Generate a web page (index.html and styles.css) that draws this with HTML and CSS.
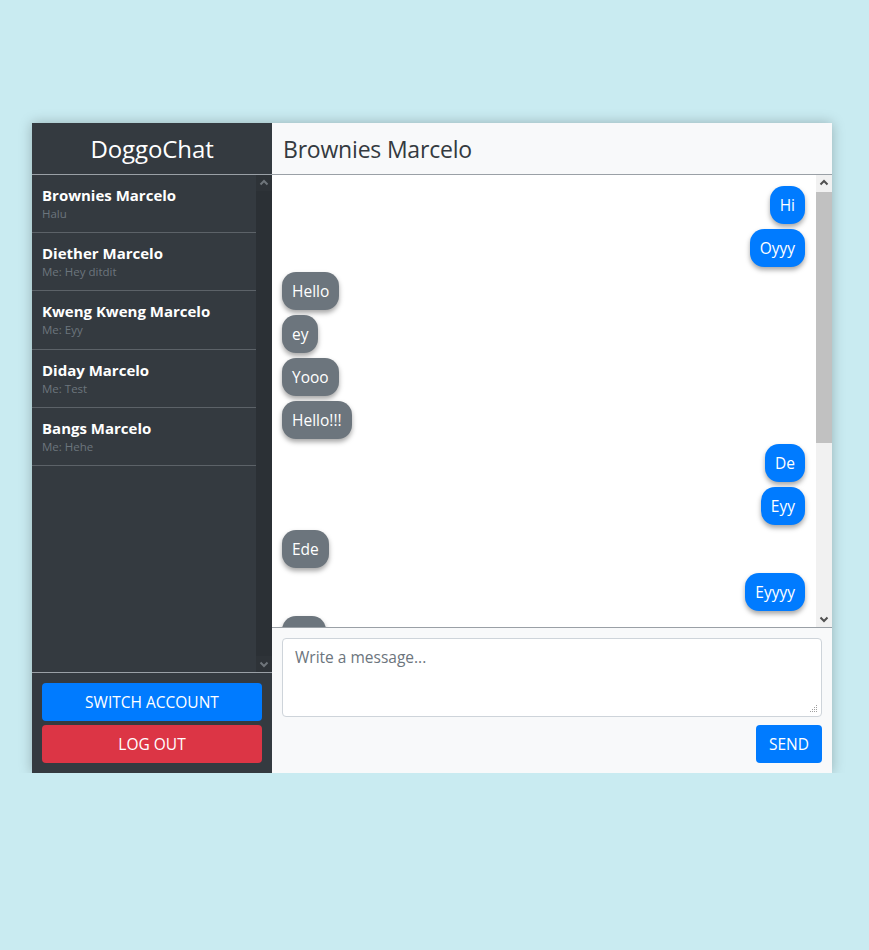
FILE: index.html
```html
<!DOCTYPE html>
<html lang="en">
<head>
<meta charset="utf-8">
<title>DoggoChat</title>
<link rel="stylesheet" href="styles.css">
</head>
<body>
<div class="app">
  <aside class="sidebar">
    <div class="brand">DoggoChat</div>
    <div class="contacts-wrap">
      <ul class="contacts">
        <li class="contact"><div class="c-name">Brownies Marcelo</div><div class="c-last">Halu</div></li>
        <li class="contact"><div class="c-name">Diether Marcelo</div><div class="c-last">Me: Hey ditdit</div></li>
        <li class="contact"><div class="c-name">Kweng Kweng Marcelo</div><div class="c-last">Me: Eyy</div></li>
        <li class="contact"><div class="c-name">Diday Marcelo</div><div class="c-last">Me: Test</div></li>
        <li class="contact"><div class="c-name">Bangs Marcelo</div><div class="c-last">Me: Hehe</div></li>
      </ul>
      <div class="sbar sbar-dark">
        <div class="sbtn"><svg width="16" height="16" viewBox="0 0 16 16"><path d="M4.5 9.5 L8 6 L11.5 9.5" fill="none" stroke="#6f757b" stroke-width="2"/></svg></div>
        <div class="strack"></div>
        <div class="sbtn"><svg width="16" height="16" viewBox="0 0 16 16"><path d="M4.5 6.5 L8 10 L11.5 6.5" fill="none" stroke="#6f757b" stroke-width="2"/></svg></div>
      </div>
    </div>
    <div class="account">
      <button class="btn btn-primary">SWITCH ACCOUNT</button>
      <button class="btn btn-danger">LOG OUT</button>
    </div>
  </aside>
  <main class="chat">
    <div class="chat-title">Brownies Marcelo</div>
    <div class="messages-wrap">
      <div class="messages">
        <div class="msg me"><span>Hi</span></div>
        <div class="msg me"><span>Oyyy</span></div>
        <div class="msg them"><span>Hello</span></div>
        <div class="msg them"><span>ey</span></div>
        <div class="msg them"><span>Yooo</span></div>
        <div class="msg them"><span>Hello!!!</span></div>
        <div class="msg me"><span>De</span></div>
        <div class="msg me"><span>Eyy</span></div>
        <div class="msg them"><span>Ede</span></div>
        <div class="msg me"><span>Eyyyy</span></div>
        <div class="msg them"><span>Eyy</span></div>
      </div>
      <div class="sbar sbar-light">
        <div class="sbtn"><svg width="16" height="16" viewBox="0 0 16 16"><path d="M4.5 9.5 L8 6 L11.5 9.5" fill="none" stroke="#505050" stroke-width="2"/></svg></div>
        <div class="strack"><div class="sthumb"></div></div>
        <div class="sbtn"><svg width="16" height="16" viewBox="0 0 16 16"><path d="M4.5 6.5 L8 10 L11.5 6.5" fill="none" stroke="#505050" stroke-width="2"/></svg></div>
      </div>
    </div>
    <div class="composer">
      <textarea class="input" placeholder="Write a message..."></textarea>
      <div class="actions"><button class="btn btn-primary btn-send">SEND</button></div>
    </div>
  </main>
</div>
</body>
</html>
```
FILE: styles.css
```css
html, body {
  margin: 0;
  padding: 0;
}
body {
  background: #c9ebf1;
  font-family: "Open Sans", "Noto Sans", sans-serif;
  color: #212529;
  padding: 123px 37px 0 32px;
}
.app {
  width: 800px;
  height: 650px;
  display: grid;
  grid-template-columns: 240px 1fr;
  box-shadow: 0 0 12px rgba(0, 0, 0, 0.25);
}
.sidebar {
  background: #343a40;
  display: flex;
  flex-direction: column;
  min-height: 0;
}
.brand {
  height: 51px;
  border-bottom: 1px solid #9aa0a6;
  color: #fff;
  font-size: 24px;
  display: flex;
  align-items: center;
  justify-content: center;
  letter-spacing: -0.1px;
}
.contacts-wrap {
  flex: 1;
  min-height: 0;
  display: flex;
}
.contacts {
  list-style: none;
  margin: 0;
  padding: 0;
  flex: 1;
  overflow: hidden;
}
.sbar {
  width: 16px;
  flex-shrink: 0;
  display: flex;
  flex-direction: column;
}
.sbtn {
  height: 16px;
  flex-shrink: 0;
}
.sbtn svg { display: block; }
.strack {
  flex: 1;
  display: flex;
  flex-direction: column;
}
.sbar-dark { background: #2b3035; }
.sbar-dark .sbtn { background: #2e3338; }
.sbar-light { background: #f1f1f1; }
.sthumb {
  margin-top: 1px;
  height: 251px;
  background: #c1c1c1;
}
.contact {
  padding: 10px 10px;
  border-bottom: 1px solid #5c6268;
}
.c-name {
  color: #fff;
  font-weight: 700;
  font-size: 15px;
  line-height: 21px;
  letter-spacing: 0;
}
.c-last {
  color: #6c757d;
  font-size: 11.5px;
  line-height: 16.2px;
}
.account {
  border-top: 1px solid #9aa0a6;
  padding: 10px;
  display: flex;
  flex-direction: column;
  gap: 4px;
}
.btn {
  font-family: inherit;
  font-size: 15.5px;
  color: #fff;
  border: none;
  border-radius: 4px;
  height: 38px;
  padding: 0 12px;
  cursor: pointer;
}
.btn-primary { background: #007bff; }
.btn-danger { background: #dc3545; }
.chat {
  background: #f8f9fa;
  display: flex;
  flex-direction: column;
  min-height: 0;
  min-width: 0;
}
.chat-title {
  height: 51px;
  border-bottom: 1px solid #9aa0a6;
  font-size: 23px;
  color: #343a40;
  display: flex;
  align-items: center;
  padding-left: 11px;
  letter-spacing: -0.2px;
}
.messages-wrap {
  height: 452px;
  flex-shrink: 0;
  display: flex;
  background: #fff;
  border-bottom: 1px solid #9aa0a6;
}
.messages {
  flex: 1;
  overflow: hidden;
  padding: 11px 11px 0 10px;
  display: flex;
  flex-direction: column;
  gap: 5px;
}
.msg {
  display: flex;
  flex-shrink: 0;
}
.msg.me { justify-content: flex-end; }
.msg span {
  display: inline-block;
  color: #fff;
  font-size: 15.5px;
  line-height: 24px;
  padding: 7px 10px;
  border-radius: 14px;
  box-shadow: 0 3px 5px rgba(0, 0, 0, 0.35);
}
.msg.me span { background: #007bff; }
.msg.them span { background: #6c757d; }
.composer {
  flex: 1;
  padding: 10px;
  display: flex;
  flex-direction: column;
}
.input {
  font-family: inherit;
  font-size: 15.5px;
  line-height: 24px;
  height: 79px;
  box-sizing: border-box;
  border: 1px solid #ced4da;
  border-radius: 4px;
  padding: 6px 12px;
  color: #495057;
  background-color: #fff;
  background-image: url("data:image/svg+xml;utf8,<svg xmlns='http://www.w3.org/2000/svg' width='8' height='8'><g fill='%23a0a0a0'><rect x='6' y='0' width='1' height='1'/><rect x='4' y='2' width='1' height='1'/><rect x='6' y='2' width='1' height='1'/><rect x='2' y='4' width='1' height='1'/><rect x='4' y='4' width='1' height='1'/><rect x='6' y='4' width='1' height='1'/><rect x='0' y='6' width='1' height='1'/><rect x='2' y='6' width='1' height='1'/><rect x='4' y='6' width='1' height='1'/><rect x='6' y='6' width='1' height='1'/></g></svg>");
  background-repeat: no-repeat;
  background-position: right 3px bottom 3px;
  margin: 0 0 8px 0;
  resize: none;
}
.input::placeholder { color: #6c757d; }
.actions {
  display: flex;
  justify-content: flex-end;
}
.btn-send {
  width: 66px;
}
```
